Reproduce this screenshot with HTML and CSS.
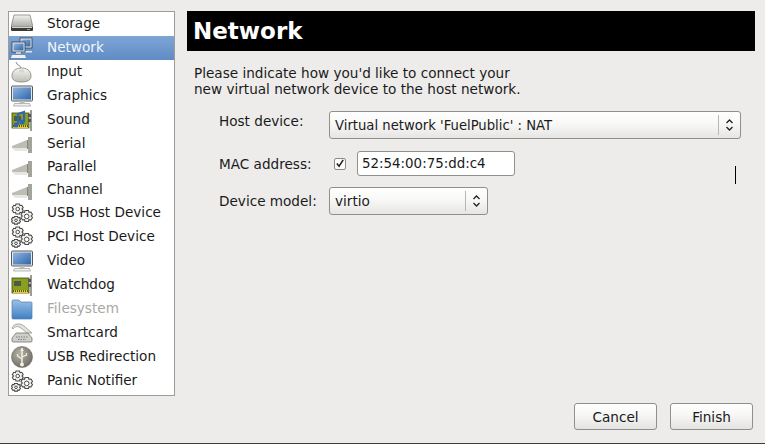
FILE: index.html
```html
<!DOCTYPE html>
<html lang="en">
<head>
<meta charset="utf-8">
<title>Network</title>
<link rel="stylesheet" href="styles.css">
</head>
<body>
<svg class="defs" width="0" height="0" aria-hidden="true">
<defs>
<linearGradient id="disk" x1="0" y1="0" x2="0" y2="1"><stop offset="0" stop-color="#f2f2f0"/><stop offset="1" stop-color="#a9a9a5"/></linearGradient>
<linearGradient id="screen" x1="0" y1="0" x2="1" y2="1"><stop offset="0" stop-color="#8fb4e0"/><stop offset="1" stop-color="#2d66ad"/></linearGradient>
<linearGradient id="mouse" x1="0" y1="0" x2="0" y2="1"><stop offset="0" stop-color="#f6f6f2"/><stop offset="1" stop-color="#bdbdb5"/></linearGradient>
<linearGradient id="folder" x1="0" y1="0" x2="0" y2="1"><stop offset="0" stop-color="#9cc0e6"/><stop offset="1" stop-color="#3f7fc2"/></linearGradient>
<radialGradient id="usb" cx=".4" cy=".35" r=".7"><stop offset="0" stop-color="#b5b2a8"/><stop offset="1" stop-color="#6f6c63"/></radialGradient>
<symbol id="i-port" viewBox="0 0 22 22">
<path d="M1 13 L16 7 V15 L1 15Z" fill="#bdbdb6"/><path d="M1 15 L16 15 V18 L4 18Z" fill="#e6e6e2"/>
<rect x="17" y="4" width="4" height="16" fill="#a4a49c"/><rect x="16" y="7" width="1" height="9" fill="#85857e"/>
</symbol>
<symbol id="i-gears" viewBox="0 0 22 22">
<g fill="#f4f4f2" stroke="#4a4a48" stroke-width="1.100">
<path d="M5 1h3.500l.5 1.700 1.800-.4 1.400 2.300-1.200 1.400 1.200 1.400-1.400 2.300-1.800-.4-.5 1.700H5l-.5-1.700-1.800.4-1.400-2.300 1.200-1.400-1.200-1.400 1.400-2.300 1.800.4z"/>
<path d="M14 7.500h3.500l.5 1.900 2 -.4 1.500 2.600-1.300 1.400 1.300 1.400-1.500 2.600-2-.4-.5 1.900H14l-.5-1.900-2 .4-1.500-2.600 1.300-1.400-1.300-1.400 1.500-2.600 2 .4z"/>
<path d="M3.500 13.500h3l.4 1.200 1.500-.3 1.100 1.900-.9 1 .9 1-1.100 1.900-1.500-.3-.4 1.200h-3l-.4-1.200-1.500.3L.5 18.300l.9-1-.9-1 1.100-1.900 1.500.3z"/>
</g>
<circle cx="6.700" cy="6" r="1.800" fill="#fff" stroke="#4a4a48"/><circle cx="15.700" cy="13.400" r="2.300" fill="#fff" stroke="#4a4a48"/><circle cx="5" cy="17.300" r="1.300" fill="#fff" stroke="#4a4a48"/>
</symbol>
<symbol id="i-monitor" viewBox="0 0 22 22">
<rect x=".5" y="1" width="21" height="15" rx="1" fill="#e8e8e6" stroke="#59595a"/><rect x="2" y="2.500" width="18" height="12" fill="url(#screen)"/>
<rect x="8.500" y="16" width="5" height="2" fill="#bcbcb8"/><path d="M3.500 18.500h15l1 2.500H2.500z" fill="#f0f0ee" stroke="#8c8c88" stroke-width=".6"/>
</symbol>
<symbol id="i-card" viewBox="0 0 22 22">
<rect x="1" y="4" width="17" height="15" fill="#8a9e22" stroke="#3f4a10" stroke-width=".8"/>
<rect x="3" y="7" width="7" height="5" fill="#4d5a46"/><rect x="2" y="16" width="15" height="3" fill="#e3c93a"/>
<path d="M2 17h15" stroke="#55620f" stroke-dasharray="1 1" stroke-width="2"/>
<rect x="19" y="1" width="2" height="21" fill="#9c9c96"/>
<rect x="17" y="5" width="3" height="3" fill="#555"/><rect x="17" y="10" width="3" height="3" fill="#555"/>
</symbol>
</defs>
</svg>
<div class="window">
<aside class="side">
<ul class="list">
<li class="row"><svg class="ico" viewBox="0 0 22 22"><path d="M3 2h16l3 12H0z" fill="url(#disk)" stroke="#77776f" stroke-width=".7"/><path d="M0 14h22v3a1 1 0 0 1-1 1H1a1 1 0 0 1-1-1z" fill="#3a3a38"/><rect x="1" y="14" width="20" height="1" fill="#d4d4cf"/><rect x="16" y="16" width="3" height="1" fill="#9a9a96"/></svg><span>Storage</span></li>
<li class="row selected"><svg class="ico" viewBox="0 0 22 22"><rect x="9" y="1" width="12" height="10" fill="#e7e7e5" stroke="#2c3a50" stroke-width=".8"/><rect x="10.500" y="2.500" width="9" height="7" fill="url(#screen)"/><path d="M12 14h9v1.500h-9z" fill="#e4e4e2"/><rect x="1" y="5" width="13" height="10" fill="#e7e7e5" stroke="#2c3a50" stroke-width=".8"/><rect x="2.500" y="6.500" width="10" height="7" fill="url(#screen)"/><rect x="5" y="15" width="5" height="2" fill="#c8c8c6"/><path d="M1 18h13l1 3H0z" fill="#f0f0ee"/></svg><span>Network</span></li>
<li class="row"><svg class="ico" viewBox="0 0 22 22"><path d="M10.500 8C10 4 6 5 5 1" fill="none" stroke="#6c6c66" stroke-width=".8"/><path d="M1 15C1 9 6 7 10.500 7C15 7 20 9 20 15C20 19.500 16 21 10.500 21C5 21 1 19.500 1 15Z" fill="url(#mouse)" stroke="#85857d" stroke-width=".8"/><path d="M8 8.500h5v3H8z" fill="#d8d8d2"/></svg><span>Input</span></li>
<li class="row"><svg class="ico"><use href="#i-monitor"/></svg><span>Graphics</span></li>
<li class="row"><svg class="ico"><use href="#i-card"/><path d="M7 5v11M7 5l6-2v10" stroke="#2f66b0" stroke-width="2.200" fill="none"/><circle cx="5" cy="16" r="2.500" fill="#2f66b0"/><circle cx="11" cy="13" r="2.500" fill="#2f66b0"/></svg><span>Sound</span></li>
<li class="row"><svg class="ico"><use href="#i-port"/></svg><span>Serial</span></li>
<li class="row short"><svg class="ico"><use href="#i-port"/></svg><span>Parallel</span></li>
<li class="row short"><svg class="ico"><use href="#i-port"/></svg><span>Channel</span></li>
<li class="row short"><svg class="ico"><use href="#i-gears"/></svg><span>USB Host Device</span></li>
<li class="row"><svg class="ico"><use href="#i-gears"/></svg><span>PCI Host Device</span></li>
<li class="row"><svg class="ico"><use href="#i-monitor"/></svg><span>Video</span></li>
<li class="row"><svg class="ico"><use href="#i-card"/></svg><span>Watchdog</span></li>
<li class="row disabled"><svg class="ico" viewBox="0 0 22 22"><path d="M1 3a1 1 0 0 1 1-1h6l2 2h10a1 1 0 0 1 1 1v15a1 1 0 0 1-1 1H2a1 1 0 0 1-1-1z" fill="url(#folder)" stroke="#4f7fb3" stroke-width=".7"/></svg><span>Filesystem</span></li>
<li class="row"><svg class="ico" viewBox="0 0 22 22"><path d="M1 6C3 1 9 1 13 4l8 7H16L10 6C7 4 4 4 2 7z" fill="#e4e4df" stroke="#8a8a84" stroke-width=".7"/><path d="M5 11h12l4 5v3a1 1 0 0 1-1 1H2a1 1 0 0 1-1-1v-3z" fill="#cfcfc9" stroke="#77776f" stroke-width=".8"/><path d="M5 15h12M7 17.500h8" stroke="#7e8490" stroke-dasharray="1.500 1"/></svg><span>Smartcard</span></li>
<li class="row"><svg class="ico" viewBox="0 0 22 22"><circle cx="11" cy="11" r="10.500" fill="url(#usb)" stroke="#6b675e" stroke-width=".6"/><path d="M11 2v16" stroke="#f2efe2" stroke-width="1.500"/><path d="M9 5l2-3 2 3z" fill="#f2efe2"/><path d="M11 13L6.500 10V8M11 11l4.500-2V7" stroke="#f2efe2" fill="none" stroke-width="1.200"/><circle cx="11" cy="18.500" r="2" fill="#f2efe2"/></svg><span>USB Redirection</span></li>
<li class="row"><svg class="ico"><use href="#i-gears"/></svg><span>Panic Notifier</span></li>
</ul>
</aside>
<main class="main">
<h1 class="title">Network</h1>
<p class="intro">Please indicate how you'd like to connect your<br>new virtual network device to the host network.</p>
<div class="form">
<div class="field host">
<label class="lbl">Host device:</label>
<div class="combo wide"><span class="value long">Virtual network 'FuelPublic' : NAT</span><span class="arrows"><svg width="9" height="14" viewBox="0 0 9 14"><path d="M1.500 5L4.500 2l3 3M1.500 9l3 3 3-3" fill="none" stroke="#222" stroke-width="1.300"/></svg></span></div>
</div>
<div class="field mac">
<label class="lbl">MAC address:</label>
<span class="check"><svg width="11" height="11" viewBox="0 0 11 11"><path d="M2 5.500l2.500 3L9 1.500" fill="none" stroke="#222" stroke-width="1.700"/></svg></span>
<div class="entry">52:54:00:75:dd:c4</div>
</div>
<div class="field model">
<label class="lbl">Device model:</label>
<div class="combo narrow"><span class="value">virtio</span><span class="arrows"><svg width="9" height="14" viewBox="0 0 9 14"><path d="M1.500 5L4.500 2l3 3M1.500 9l3 3 3-3" fill="none" stroke="#222" stroke-width="1.300"/></svg></span></div>
</div>
</div>
<span class="caret"></span>
<div class="actions">
<button class="btn">Cancel</button>
<button class="btn">Finish</button>
</div>
</main>
</div>
</body>
</html>
```
FILE: styles.css
```css
* { box-sizing: border-box; }
html, body { margin: 0; padding: 0; }
body {
  width: 765px;
  height: 444px;
  overflow: hidden;
  background: #edecea;
  font-family: "DejaVu Sans", sans-serif;
  font-size: 13.6px;
  color: #1a1a1a;
}
.defs { position: absolute; }
.window {
  height: 444px;
  display: flex;
  padding: 11px 10px 0 8px;
  border-bottom: 1px solid #3c3c3c;
}
.side { width: 167px; height: 385px; flex: none; }
.list {
  list-style: none;
  margin: 0;
  padding: 0;
  height: 385px;
  background: #fff;
  border: 1px solid #9c9c98;
}
.row {
  height: 24px;
  display: flex;
  align-items: center;
  padding-left: 2px;
  gap: 14px;
  white-space: nowrap;
}
.row span { margin-top: -2px; }
.row.short { height: 23px; }
.row.short span { margin-top: -3px; }
.row.selected {
  background: linear-gradient(#7fa5d6, #5f8cc4);
  color: #f2f6fb;
}
.row.disabled { color: #a8a8a6; }
.ico { width: 22px; height: 22px; flex: none; }
.main {
  flex: 1;
  margin-left: 12px;
  display: flex;
  flex-direction: column;
  position: relative;
}
.title {
  margin: 0;
  height: 40px;
  background: #000;
  color: #fff;
  font-size: 23px;
  font-weight: bold;
  line-height: 40px;
  padding-left: 6px;
}
.intro {
  margin: 14px 0 0 7px;
  line-height: 16px;
  height: 32px;
}
.form { margin: 14px 0 0 32px; }
.field { display: flex; align-items: center; }
.lbl { width: 110px; flex: none; }
.host { height: 28px; }
.host .lbl { margin-top: -8px; }
.mac { height: 25px; margin-top: 12px; }
.model { height: 28px; margin-top: 11px; }
.combo {
  height: 28px;
  border: 1px solid #8f8f8b;
  border-radius: 3px;
  background: linear-gradient(#ffffff, #f8f8f7 45%, #e6e5e3);
  display: flex;
  align-items: center;
  padding-left: 5px;
}
.wide { width: 412px; }
.narrow { width: 159px; }
.value { flex: 1; }
.long { font-size: 13.2px; }
.arrows {
  width: 22px;
  height: 20px;
  border-left: 1px solid #b8b8b4;
  display: flex;
  align-items: center;
  justify-content: center;
}
.check {
  width: 12px;
  height: 12px;
  flex: none;
  border: 1px solid #8a8a86;
  border-radius: 2px;
  background: #fbfbfa;
  display: flex;
  align-items: center;
  justify-content: center;
  margin-left: 5px;
}
.entry {
  margin-left: 11px;
  width: 158px;
  height: 25px;
  border: 1px solid #8f8f8b;
  border-radius: 3px;
  background: #fff;
  padding-left: 4px;
  font-size: 13.4px;
  line-height: 23px;
}
.caret {
  position: absolute;
  left: 548px;
  top: 155px;
  width: 1px;
  height: 18px;
  background: #000;
}
.actions {
  position: absolute;
  right: 2px;
  top: 392px;
  display: flex;
  gap: 13px;
}
.btn {
  width: 83px;
  height: 27px;
  padding: 0;
  border: 1px solid #8f8f8b;
  border-radius: 3px;
  background: linear-gradient(#ffffff, #f6f6f5 45%, #e4e3e1);
  font: inherit;
  color: inherit;
}
```
